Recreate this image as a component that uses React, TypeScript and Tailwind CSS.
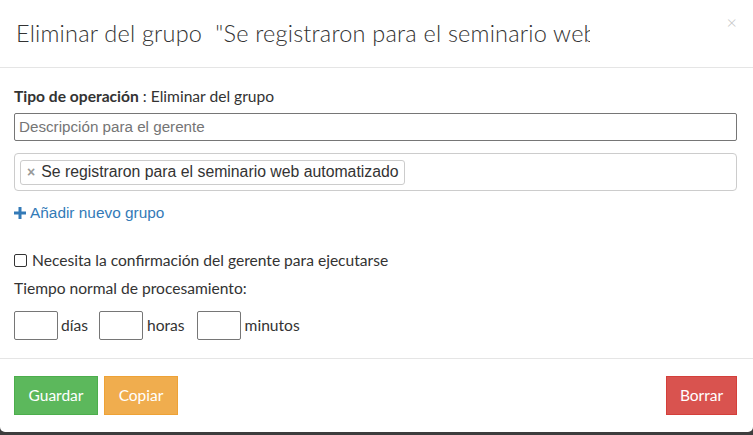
import React from "react";

export default function App() {
  const lato = { fontFamily: "Lato, 'Open Sans', sans-serif" } as React.CSSProperties;
  const arial = { fontFamily: "'Liberation Sans', Arial, sans-serif" } as React.CSSProperties;
  return (
    <div className="w-[753px] h-[435px] bg-[#3d3d3d] overflow-hidden" style={lato}>
      <div className="w-[753px] h-[432px] bg-white rounded-b-[5px] flex flex-col">
        {/* header */}
        <div className="h-[68px] border-b border-[#e5e5e5] flex items-start relative">
          <div className="w-[590px] overflow-hidden whitespace-nowrap pl-[16px] pt-[18px] text-[23.5px] font-light text-[#333] leading-[30px] tracking-[0.2px]">
            Eliminar del grupo &nbsp;"Se registraron para el seminario web
          </div>
          <div className="absolute right-[16px] top-[12px] text-[#c4c4c4] text-[18px] leading-[20px] font-light">
            ×
          </div>
        </div>
        {/* body */}
        <div className="flex-1 pl-[14px] pr-[16px] pt-[18px] border-b border-[#e5e5e5] text-[#333]">
          <div className="text-[15.6px] leading-[20px]">
            <span className="font-bold">Tipo de operación</span> : Eliminar del grupo
          </div>
          <div
            className="mt-[7px] h-[28px] border border-[#767676] rounded-[2px] flex items-center px-[4px] text-[15.2px] text-[#757575]"
            style={arial}
          >
            Descripción para el gerente
          </div>
          <div className="mt-[12px] h-[38px] border border-[#ccc] rounded-[4px] flex items-center px-[5px]">
            <div
              className="h-[25px] border border-[#ccc] rounded-[3px] flex items-center pl-[6px] pr-[5px] text-[15.8px] text-[#333]"
              style={arial}
            >
              <span className="text-[#999] text-[14px] font-bold mr-[6px]">×</span>
              Se registraron para el seminario web automatizado
            </div>
          </div>
          <div
            className="mt-[12px] flex items-center text-[#337ab7] text-[15.4px] leading-[20px]"
            style={arial}
          >
            <svg width="12" height="12" viewBox="0 0 12 12" className="mr-[4px]">
              <rect x="4.5" y="0" width="3" height="12" fill="#337ab7" />
              <rect x="0" y="4.5" width="12" height="3" fill="#337ab7" />
            </svg>
            Añadir nuevo grupo
          </div>
          <div className="mt-[27px] flex items-center text-[15.6px] leading-[20px]">
            <span className="inline-block w-[13px] h-[13px] border border-[#333] rounded-[2px] mr-[5px]" />
            Necesita la confirmación del gerente para ejecutarse
          </div>
          <div className="mt-[8px] text-[15.6px] leading-[20px] text-[#333]">Tiempo normal de procesamiento:</div>
          <div className="mt-[13px] flex items-center text-[15.6px]">
            <span className="w-[44px] h-[29px] border border-[#767676] rounded-[2px]" />
            <span className="ml-[3px] mr-[11px]">días</span>
            <span className="w-[44px] h-[29px] border border-[#767676] rounded-[2px]" />
            <span className="ml-[4px] mr-[12px]">horas</span>
            <span className="w-[44px] h-[29px] border border-[#767676] rounded-[2px]" />
            <span className="ml-[4px]">minutos</span>
          </div>
        </div>
        {/* footer */}
        <div className="h-[73px] pl-[14px] pr-[16px] flex items-start pt-[17px]">
          <button className="h-[39px] w-[84px] bg-[#5cb85c] border border-[#4cae4c] text-white text-[15.5px]">Guardar</button>
          <button className="ml-[6px] h-[39px] w-[74px] bg-[#f0ad4e] border border-[#eea236] text-white text-[15.5px]">Copiar</button>
          <div className="flex-1" />
          <button className="h-[39px] w-[71px] bg-[#d9534f] border border-[#d43f3a] text-white text-[15.5px]">Borrar</button>
        </div>
      </div>
    </div>
  );
}
